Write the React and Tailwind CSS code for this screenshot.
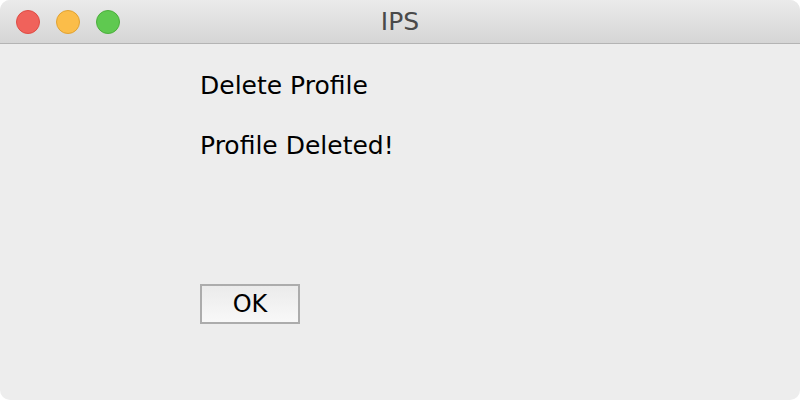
import React from 'react';

const Light = ({ fill, ring }) => (
  <span
    className="block w-[24px] h-[24px] rounded-full border"
    style={{ backgroundColor: fill, borderColor: ring }}
  />
);

const App = () => {
  return (
    <div className="w-[800px] h-[400px] bg-white">
      <div className="w-full h-full rounded-[10px] overflow-hidden bg-[#ededed] flex flex-col font-['DejaVu_Sans',sans-serif]">
        {/* title bar */}
        <div className="relative h-[44px] shrink-0 bg-gradient-to-b from-[#ebebeb] to-[#d5d5d5] border-b border-[#b4b4b4] flex items-center">
          <div className="flex items-center gap-[16px] pl-[16px]">
            <Light fill="#f0625b" ring="#de4c44" />
            <Light fill="#fbbd49" ring="#e0a232" />
            <Light fill="#5fc950" ring="#4cae3c" />
          </div>
          <div className="absolute inset-0 flex items-center justify-center text-[25px] text-[#4a4a4a] pointer-events-none">
            IPS
          </div>
        </div>

        {/* content */}
        <div className="flex flex-col pl-[200px] pt-[26px] text-black text-[25px] leading-[32px]">
          <p>Delete Profile</p>
          <p className="mt-[28px]">Profile Deleted!</p>
          <div className="mt-[122px]">
            <button className="w-[100px] h-[40px] border-2 border-[#acacac] bg-gradient-to-b from-[#ebebeb] to-[#f8f8f8] text-[24px] text-black flex items-center justify-center">
              OK
            </button>
          </div>
        </div>
      </div>
    </div>
  );
};

export default App;
